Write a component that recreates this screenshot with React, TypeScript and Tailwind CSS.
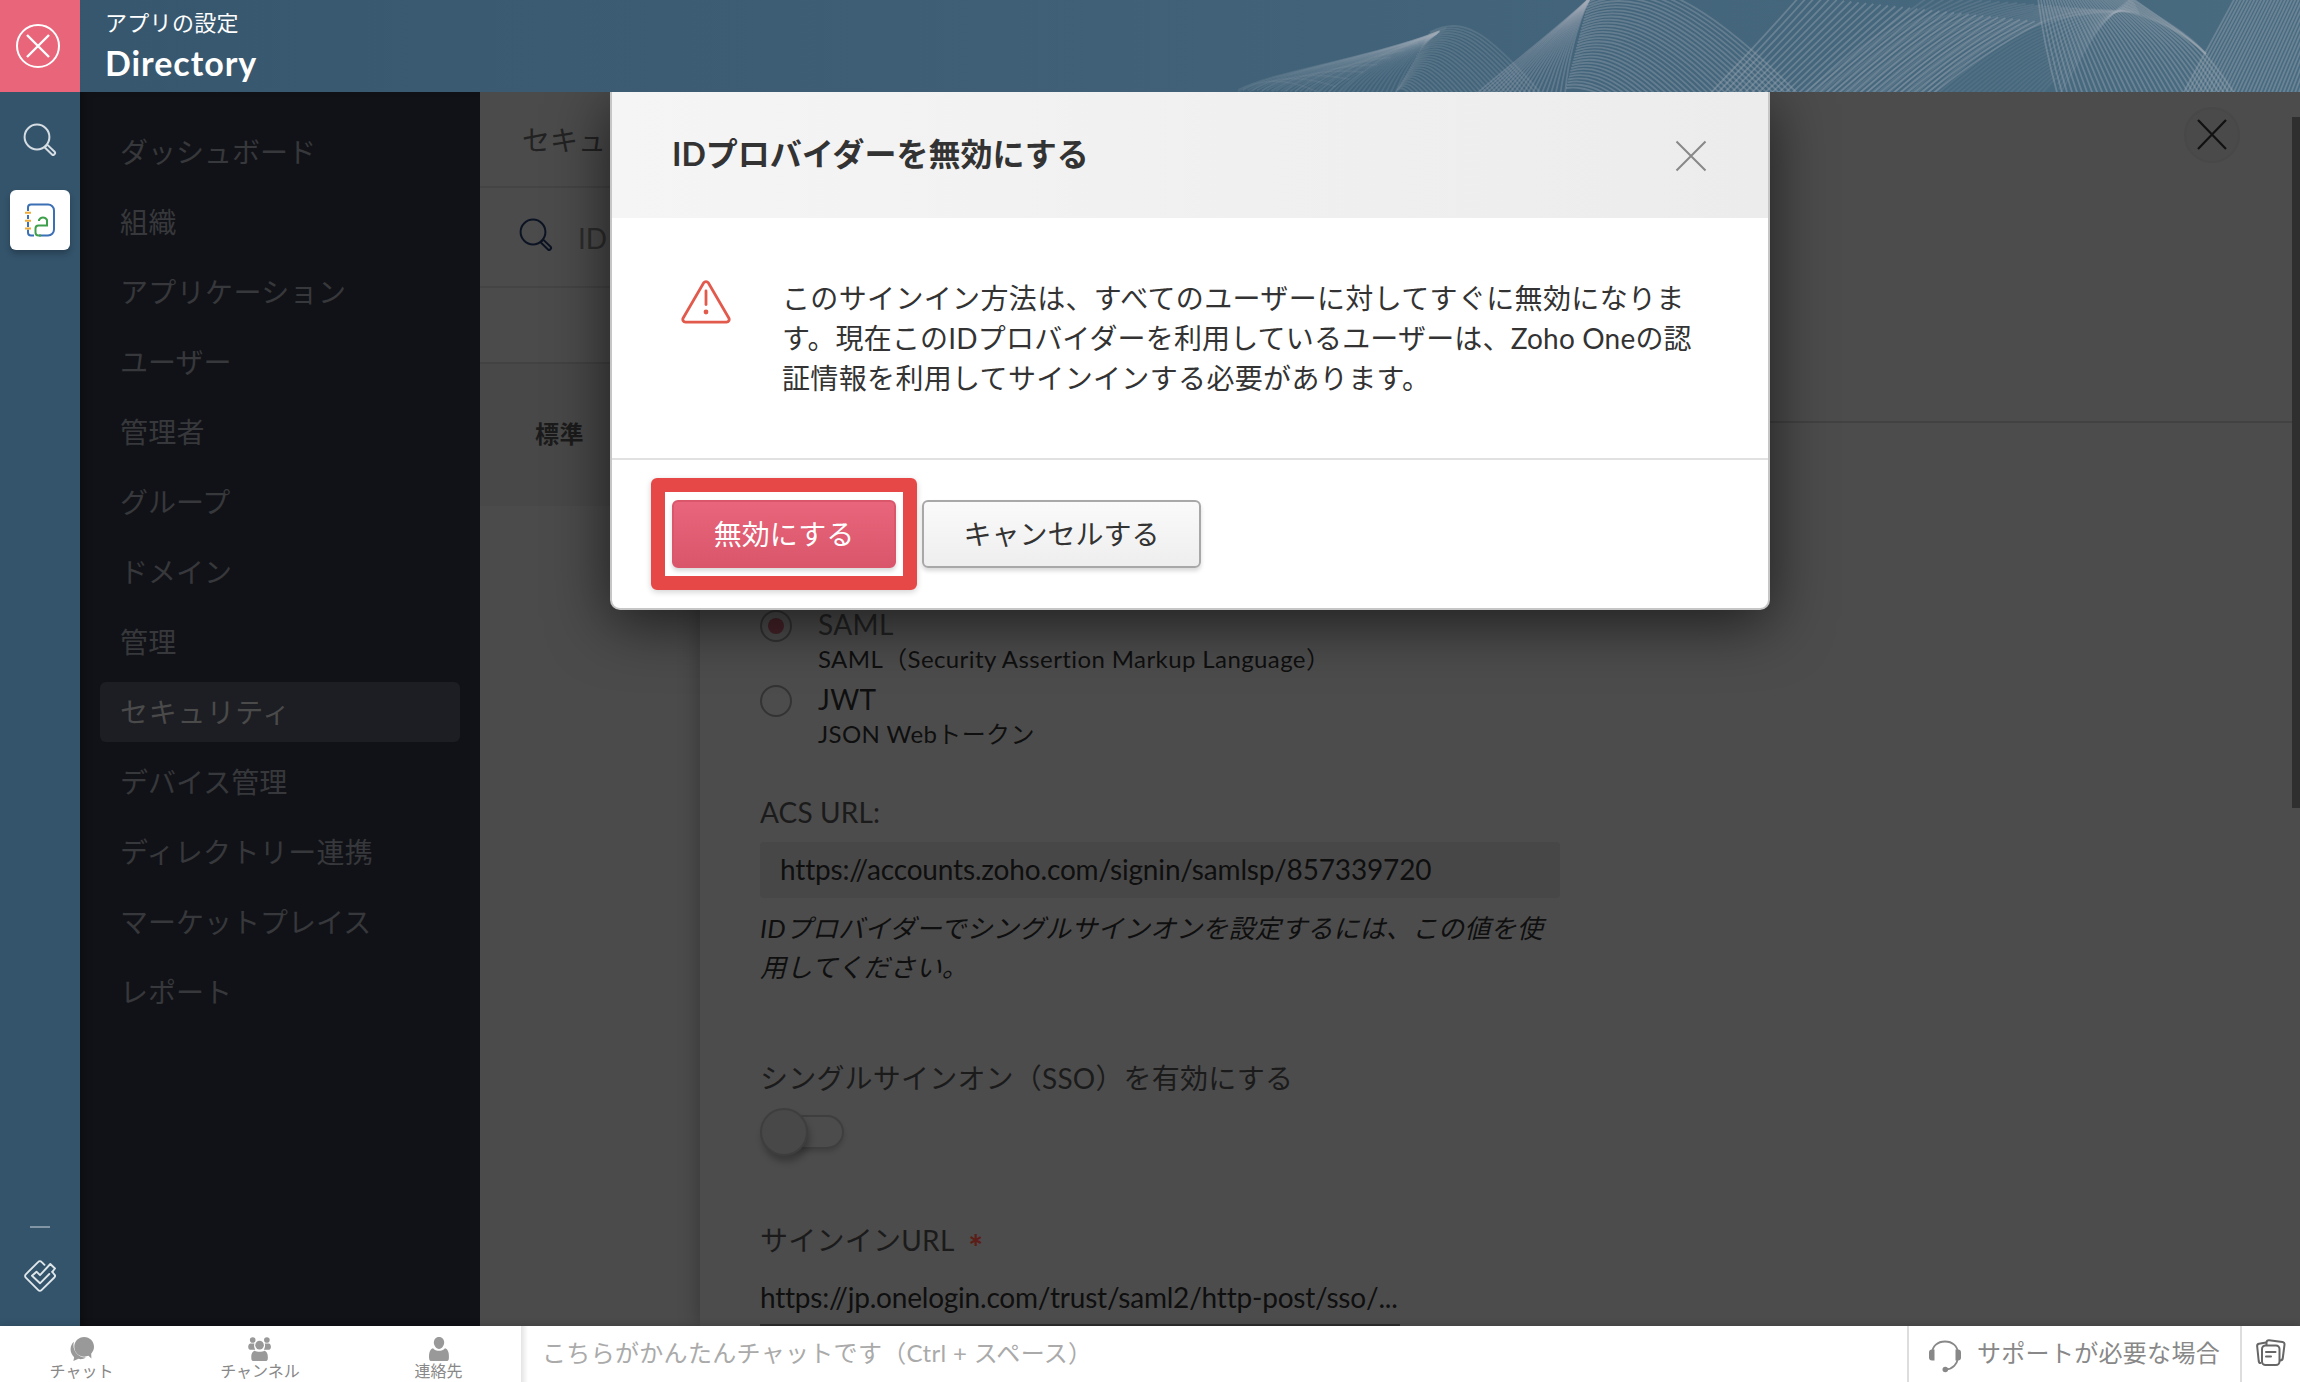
import React from "react";

type Curve = number[];

const FAMILIES: { from: Curve; to: Curve; count: number; opacity: number }[] = [
  // small hill: rising strands, then falling strands
  { from: [1238, 90, 1270, 72, 1370, 58, 1440, 31], to: [1395, 94, 1404, 70, 1416, 50, 1436, 34], count: 34, opacity: 0.16 },
  { from: [1430, 32, 1464, 16, 1486, 30, 1545, 98], to: [1396, 92, 1400, 86, 1404, 88, 1410, 94], count: 28, opacity: 0.22 },
  { from: [1238, 92, 1262, 76, 1290, 78, 1322, 94], to: [1340, 92, 1362, 70, 1390, 50, 1446, 28], count: 10, opacity: 0.1 },
  // large hill
  { from: [1476, 94, 1514, 62, 1550, 34, 1590, -2], to: [1565, 94, 1568, 60, 1576, 28, 1590, -2], count: 20, opacity: 0.3 },
  { from: [1590, -6, 1640, -30, 1700, -6, 1800, 96], to: [1566, 88, 1580, 86, 1592, 90, 1604, 96], count: 34, opacity: 0.34 },
  // wide ribbon
  { from: [1708, 96, 1740, 62, 1770, 30, 1800, -4], to: [1930, 96, 1970, 64, 2006, 40, 2042, 22], count: 34, opacity: 0.38 },
  { from: [1800, 96, 1870, 40, 1890, 24, 1930, -4], to: [1930, 96, 1980, 50, 2030, 10, 2130, 12], count: 24, opacity: 0.18 },
  { from: [1935, 96, 1975, 62, 2010, 36, 2042, 24], to: [2040, 96, 2044, 90, 2050, 84, 2056, 78], count: 20, opacity: 0.12 },
  // right hill
  { from: [2038, -2, 2042, 30, 2048, 60, 2058, 96], to: [2132, -2, 2180, 34, 2196, 34, 2236, 96], count: 36, opacity: 0.38 },
  { from: [2042, 22, 2080, 6, 2110, 8, 2140, 14], to: [2060, 94, 2090, 40, 2100, 20, 2132, -2], count: 16, opacity: 0.16 },
  { from: [2130, -2, 2160, 18, 2190, 34, 2206, 54], to: [2120, 10, 2150, 16, 2180, 30, 2206, 54], count: 6, opacity: 0.22 },
  // far right ribbon
  { from: [2182, 96, 2200, 62, 2218, 30, 2236, -4], to: [2340, 96, 2350, 62, 2362, 30, 2375, -4], count: 42, opacity: 0.38 },
];

function HeaderArt() {
  return (
    <svg className="absolute top-0 right-0" width="1100" height="92" viewBox="1200 0 1100 92" fill="none">
      {FAMILIES.map((f, i) => (
        <g key={i} stroke="#a4adb8" strokeOpacity={f.opacity} strokeWidth="1.8">
          {Array.from({ length: f.count }, (_, k) => {
            const t = k / (f.count - 1);
            const p = f.from.map((v, n) => (v + (f.to[n] - v) * t).toFixed(1));
            return <path key={k} d={`M${p[0]} ${p[1]}C${p[2]} ${p[3]} ${p[4]} ${p[5]} ${p[6]} ${p[7]}`} />;
          })}
        </g>
      ))}
    </svg>
  );
}

function SearchIcon({ className }: { className: string }) {
  return (
    <svg className={className} width="34" height="34" viewBox="0 0 34 34" fill="none" stroke="currentColor" strokeWidth="2">
      <circle cx="14" cy="14" r="12.4" />
      <path d="M21.6 24.2l2.6-2.6 7.4 7.2a1.6 1.6 0 0 1 0 2.2l-.4.4a1.6 1.6 0 0 1-2.2 0z" strokeLinejoin="round" />
    </svg>
  );
}

const NAV: [string, string][] = [
  ["ダッシュボード", "tracking-normal"],
  ["組織", "tracking-[0.4px]"],
  ["アプリケーション", "tracking-[0.35px]"],
  ["ユーザー", "tracking-normal"],
  ["管理者", "tracking-[0.2px]"],
  ["グループ", "tracking-normal"],
  ["ドメイン", "tracking-normal"],
  ["管理", "tracking-[0.2px]"],
  ["セキュリティ", "tracking-[0.8px]"],
  ["デバイス管理", "tracking-normal"],
  ["ディレクトリー連携", "tracking-[0.35px]"],
  ["マーケットプレイス", "tracking-normal"],
  ["レポート", "tracking-normal"],
];

function Header() {
  return (
    <header className="relative flex h-[92px] shrink-0 bg-linear-to-r from-[#36566e] to-[#496b80]">
      <HeaderArt />
      <div className="flex w-20 items-center bg-[#e9667a] pl-[15px]">
        <svg width="46" height="46" viewBox="0 0 46 46" fill="none" stroke="#fff" strokeWidth="2">
          <circle cx="23" cy="23" r="21" />
          <path d="M12 12l22 22M34 12L12 34" strokeWidth="2.4" />
        </svg>
      </div>
      <div className="pl-[25px] text-white">
        <div className="mt-[7px] h-8 text-[22px] leading-8 tracking-[0.3px]">アプリの設定</div>
        <div className="h-12 text-[34px] leading-[48px] font-bold tracking-[0.95px]">Directory</div>
      </div>
    </header>
  );
}

function Rail() {
  return (
    <aside className="flex w-20 shrink-0 flex-col bg-[#34546c]">
      <SearchIcon className="mt-[31px] ml-[23px] text-[#d5dde3]" />
      <div className="mt-[33px] ml-[10px] flex size-[60px] items-center justify-center rounded-md bg-white shadow-[0_4px_6px_rgba(0,0,0,0.25)]">
        <svg width="32" height="34" viewBox="0 0 32 34" fill="none" strokeWidth="2">
          <path d="M4 8V4.500a3 3 0 0 1 3-3h17a6 6 0 0 1 6 6v19a6 6 0 0 1-6 6h-9M10 32.500H7a3 3 0 0 1-3-3v-3M4 12v4M4 19v5" stroke="#3b6fb6" />
          <path d="M15 18v-1a4.500 4.500 0 0 1 8 0v5.500h-8.500a3 3 0 0 0-3 3v4a3 3 0 0 0 3 3H17" stroke="#3fa04c" />
          <path d="M1 9.800h6M1 17.700h6M1 25.500h6" stroke="#efad3c" />
        </svg>
      </div>
      <div className="mt-auto ml-[30px] h-[2px] w-5 bg-[#8295a4]" />
      <svg className="mt-8 mb-[34px] ml-6" width="32" height="32" viewBox="0 0 32 32" fill="none" stroke="#dfe6ea" strokeWidth="1.900" strokeLinejoin="round" strokeLinecap="round">
        <path d="M20.500 4.800l-3-3a2.200 2.200 0 0 0-3.200 0L1.800 14.300a2.400 2.400 0 0 0 0 3.400L14.300 30.200a2.200 2.200 0 0 0 3.200 0L30.300 17.500a2.300 2.300 0 0 0 0-3.200l-2-2.300" />
        <path d="M25.300 14l-9.300 9.300L8 15.700l4.500-4 3.500 3.500L26.300 4l4.700 4.500-2.700 3.300" />
      </svg>
    </aside>
  );
}

function Sidebar() {
  return (
    <nav className="flex w-[400px] shrink-0 flex-col gap-[10px] bg-[#111217] px-5 pt-[30px] shadow-[inset_8px_0_8px_-4px_rgba(0,0,0,0.25)]">
      {NAV.map(([label, tracking]) => (
        <div
          key={label}
          className={
            label === "セキュリティ"
              ? "h-[60px] rounded-md bg-[#1d1e23] pl-[20px] text-[28px] leading-[60px] text-[#4a4a4a]"
              : "h-[60px] pl-[20px] text-[28px] leading-[60px] text-[#37383b]"
          }
        >
          <span className={tracking}>{label}</span>
        </div>
      ))}
    </nav>
  );
}

function ListColumn() {
  return (
    <section className="w-[220px] shrink-0 bg-[#4b4b4b]">
      <div className="h-[96px] overflow-hidden border-b-2 border-[#444] pl-[42px] text-[28px] leading-[96px] text-[#222]">
        セキュ
      </div>
      <div className="flex h-[100px] items-center border-b-2 border-[#444] pl-[39px]">
        <SearchIcon className="-mt-[5px] text-[#0c1424]" />
        <span className="ml-[25px] pt-[2px] text-[28px] text-[#2c2c2c]">ID</span>
      </div>
      <div className="h-[76px] border-b-2 border-[#424242]" />
      <div className="h-[142px] bg-[#484848] pl-[55px] text-[24px] leading-[139px] font-bold tracking-[0.4px] text-[#1b1b1b]">標準</div>
    </section>
  );
}

function Option({ name, detail, checked }: { name: string; detail: string; checked?: boolean }) {
  return (
    <div className="flex h-[75px] gap-[26px]">
      <span className="mt-[10px] flex size-8 items-center justify-center rounded-full border-2 border-[#333]">
        {checked && <span className="size-4 rounded-full bg-[#46232a]" />}
      </span>
      <div className="tracking-[0.4px]">
        <div className={checked ? "h-[42px] text-[28px] leading-[48px] text-[#222]" : "h-[42px] text-[28px] leading-[48px] text-[#0f0f0f]"}>{name}</div>
        <div className="h-[33px] text-[24px] leading-[33px] text-[#0f0f0f]">{detail}</div>
      </div>
    </div>
  );
}

function DetailPanel() {
  return (
    <section className="relative flex flex-1 flex-col bg-[#4c4c4c] shadow-[0_0_20px_rgba(0,0,0,0.3)]">
      <div className="flex h-[331px] shrink-0 items-start justify-end border-b-2 border-[#424242] pt-[14px] pr-[59px]">
        <svg width="58" height="58" viewBox="0 0 58 58" fill="none">
          <circle cx="29" cy="29" r="27" fill="#4a4a4a" stroke="#484848" strokeWidth="2" />
          <path d="M15 14l28 29M43 14L15 43" stroke="#111" strokeWidth="2.200" />
        </svg>
      </div>
      <div className="shrink-0 pt-[177px] pl-[60px]">
        <Option name="SAML" detail="SAML（Security Assertion Markup Language）" checked />
        <Option name="JWT" detail="JSON Webトークン" />
        <div className="mt-[42px] h-[40px] text-[28px] leading-[40px] tracking-[0.15px] text-[#1b1b1b]">ACS URL:</div>
        <div className="mt-[10px] h-14 w-[800px] rounded-sm bg-[#474747] pl-5 text-[28px] leading-[55px] tracking-[-0.16px] text-[#0f0f0f]">
          https://accounts.zoho.com/signin/samlsp/857339720
        </div>
        <div className="mt-[11px] w-[800px] text-[26px] leading-[39px] tracking-[0.2px] whitespace-nowrap text-[#0f0f0f] italic">
          IDプロバイダーでシングルサインオンを設定するには、この値を使
          <br />
          用してください。
        </div>
        <div className="mt-[71px] h-[40px] text-[28px] leading-[40px] tracking-[0.2px] text-[#1b1b1b]">シングルサインオン（SSO）を有効にする</div>
        <div className="relative mt-[10px] flex h-[48px] items-center">
          <div className="ml-4 h-[34px] w-[68px] rounded-full border-2 border-[#3e3e3e] shadow-[0_3px_4px_rgba(0,0,0,0.15)]" />
          <div className="absolute top-0 left-0 size-[48px] rounded-full border-2 border-[#3e3e3e] bg-[#484848] shadow-[2px_6px_6px_rgba(0,0,0,0.25)]" />
        </div>
        <div className="mt-[64px] flex h-[40px] text-[28px] leading-[40px] tracking-[0.25px] text-[#1b1b1b]">
          サインインURL
          <span className="mt-[7px] ml-[14px] text-[34px] leading-[40px] font-black text-[#5c1d18]">*</span>
        </div>
        <div className="mt-[14px] h-[54px] w-[640px] border-b-4 border-[#2d2d2d] text-[28px] leading-[47px] tracking-[-0.21px] whitespace-nowrap text-[#0f0f0f]">
          https://jp.onelogin.com/trust/saml2/http-post/sso/...
        </div>
      </div>
      <div className="absolute top-[25px] right-0 h-[691px] w-2 bg-[#2f2f2f]" />
    </section>
  );
}

function Modal() {
  return (
    <div className="absolute top-0 left-[610px] h-[518px] w-[1160px] rounded-b-[10px] border-x-2 border-b-2 border-[#c6c6c6] bg-white text-[#333] shadow-[0_12px_60px_rgba(0,0,0,0.62)]">
      <div className="flex h-[126px] items-start justify-between bg-linear-to-r from-[#f5f5f5] to-[#ececec] pt-[41px] pr-[61px] pl-[60px]">
        <h2 className="h-[42px] text-[32px] leading-[42px] font-bold">IDプロバイダーを無効にする</h2>
        <svg className="mt-[7px]" width="32" height="32" viewBox="0 0 32 32" fill="none" stroke="#888" strokeWidth="2">
          <path d="M1.500 1.500l29 29M30.500 1.500l-29 29" />
        </svg>
      </div>
      <div className="flex h-[242px] border-b-2 border-[#e1e1e1] pt-[60px] pl-[69px]">
        <svg className="mt-[2px]" width="50" height="44" viewBox="0 0 50 44" fill="none" stroke="#e25a4c" strokeWidth="2.800">
          <path d="M22.700 2.800a2.800 2.800 0 0 1 4.600 0L47.800 38a2.800 2.800 0 0 1-2.300 4.200h-41A2.800 2.800 0 0 1 2.200 38z" />
          <path d="M25 11v13.500" strokeLinecap="round" />
          <circle cx="25" cy="32" r="2.400" fill="#e25a4c" stroke="none" />
        </svg>
        <p className="ml-[51px] text-[28px] leading-[40px] tracking-[0.35px] whitespace-nowrap">
          このサインイン方法は、すべてのユーザーに対してすぐに無効になりま
          <br />
          <span className="tracking-[0.18px]">す。現在このIDプロバイダーを利用しているユーザーは、Zoho Oneの認</span>
          <br />
          証情報を利用してサインインする必要があります。
        </p>
      </div>
      <div className="flex pt-[18px] pl-[39px]">
        <div className="h-[112px] w-[266px] rounded-md border-[14px] border-[#e54847] p-[8px_7px] shadow-[0_2px_6px_rgba(0,0,0,0.18)]">
          <button className="block h-[68px] w-[224px] rounded-md border-2 border-[#d9566b] bg-linear-to-b from-[#e8657b] to-[#d9566b] text-[28px] leading-[64px] text-white shadow-[0_3px_4px_rgba(0,0,0,0.15)]">
            無効にする
          </button>
        </div>
        <button className="mt-[22px] ml-[5px] h-[68px] w-[279px] rounded-md border-2 border-[#a8a8a8] bg-linear-to-b from-[#fafafa] to-[#eee] text-[28px] leading-[64px] shadow-[0_3px_4px_rgba(0,0,0,0.15)]">
          キャンセルする
        </button>
      </div>
    </div>
  );
}

const ChatIcon = (
  <svg width="28" height="28" viewBox="0 0 28 28" fill="#999">
    <path d="M4.500 5.500C-.5 10-.8 18 4.800 23.500L4 28l6-2.500c3 .8 6 0 8.500-1.500C9 24 2 15 4.500 5.500z" />
    <path d="M16.500 0C10 0 5 5 5 11.500S10 23 16.500 23c1.800 0 3.500-.4 5-1l3.500 3-.3-5.500C26.800 17.300 28 14.500 28 11.500 28 5 23 0 16.500 0z" />
  </svg>
);
const ChannelIcon = (
  <svg width="28" height="28" viewBox="0 0 28 28" fill="#999">
    <circle cx="5.500" cy="3.500" r="3.300" />
    <circle cx="22" cy="3.500" r="3.300" />
    <circle cx="13.500" cy="9.500" r="5" />
    <path d="M2.500 7.500h5c-1 3 0 5.500 1 7.500H2.500C-.5 15-.5 8 2.500 7.500zM24.500 7.500h-5c1 3 0 5.500-1 7.500h6c3 0 3-7 0-7.500zM8 16c2 1.500 9 1.500 11 0 4 1 4.500 6 4 10-.2 1.500-1 2-2.500 2h-14C5 28 4.200 27.500 4 26c-.5-4 0-9 4-10z" />
  </svg>
);
const ContactIcon = (
  <svg width="28" height="28" viewBox="0 0 28 28" fill="#999">
    <path d="M14 0c4 0 6 3 6 6.500S17.500 14 14 14 8 10 8 6.500 10 0 14 0z" />
    <path d="M7 13c3.500 4 10.500 4 14 0 4 1 5 7 4.500 12-.2 2-1 3-3 3h-17c-2 0-2.800-1-3-3-.5-5 .5-11 4.500-12z" />
  </svg>
);

function Footer() {
  const tabs: [string, React.ReactNode, string][] = [
    ["チャット", ChatIcon, "flex w-[163px] flex-col items-center pt-[11px]"],
    ["チャンネル", ChannelIcon, "flex w-[194px] flex-col items-center pt-[11px]"],
    ["連絡先", ContactIcon, "flex w-[163px] flex-col items-center pt-[11px]"],
  ];
  return (
    <footer className="relative flex h-14 shrink-0 bg-white shadow-[0_0_8px_rgba(0,0,0,0.2)]">
      <div className="flex w-[521px]">
        {tabs.map(([label, icon, cls]) => (
          <div key={label} className={cls}>
            <span className="h-[24px] [&>svg]:h-[24px]">{icon}</span>
            <span className="text-[16px] leading-[20px] text-[#888]">{label}</span>
          </div>
        ))}
      </div>
      <div className="flex-1 bg-linear-to-r from-[#e4e4e4] to-white to-[7px] pl-[21px] text-[24px] leading-[54px] tracking-[0.32px] text-[#aaa]">
        こちらがかんたんチャットです（Ctrl + スペース）
      </div>
      <div className="flex w-[333px] border-l-2 border-[#ddd] pl-[19px]">
        <svg className="mt-[14px]" width="34" height="34" viewBox="0 0 34 34" fill="none" stroke="#888" strokeWidth="1.800">
          <path d="M4 13C4.500 6 9.500 1.500 17 1.500S29.500 6 30 13v5c-1 6-5 11-12 11.500" />
          <path d="M1 12.500a3 3 0 0 1 3-3h2.500v11H4a3 3 0 0 1-3-3zM33 12.500a3 3 0 0 0-3-3h-2.500v11H30a3 3 0 0 0 3-3z" fill="#888" stroke="none" />
          <circle cx="17.300" cy="29.500" r="2.800" fill="#888" stroke="none" />
        </svg>
        <span className="ml-[15px] text-[24px] leading-[54px] tracking-[0.3px] text-[#888]">サポートが必要な場合</span>
      </div>
      <div className="w-[60px] border-l-2 border-[#ddd] pt-[13px] pl-[14px]">
        <svg width="30" height="28" viewBox="0 0 30 28" fill="none" stroke="#666" strokeWidth="2" strokeLinejoin="round" strokeLinecap="round">
          <rect x="6" y="6.500" width="17.500" height="19.500" rx="3.500" />
          <path d="M10 13h9.500M10 17.500h5M4.500 24c-1 0-1.600-.8-1.800-2L1.200 7.500C1 6 1.800 5 3 4.800l7-1.300" />
          <path d="M10.500 6V3.500c.2-1.600 1.200-2.300 2.600-2.200L26.500 3c1.400.2 2.200 1.200 2 2.600L26.800 19c-.2 1.600-1 2.400-2.800 2.600" />
        </svg>
      </div>
    </footer>
  );
}

export default function App() {
  return (
    <div className="flex h-[1382px] w-[2300px] flex-col overflow-hidden bg-[#4c4c4c] font-['Lato','Noto_Sans_CJK_JP',sans-serif]">
      <Header />
      <div className="relative flex h-[1234px] shrink-0 overflow-hidden">
        <Rail />
        <Sidebar />
        <main className="flex flex-1 overflow-hidden bg-[#4b4b4b]">
          <ListColumn />
          <DetailPanel />
        </main>
        <Modal />
      </div>
      <Footer />
    </div>
  );
}
